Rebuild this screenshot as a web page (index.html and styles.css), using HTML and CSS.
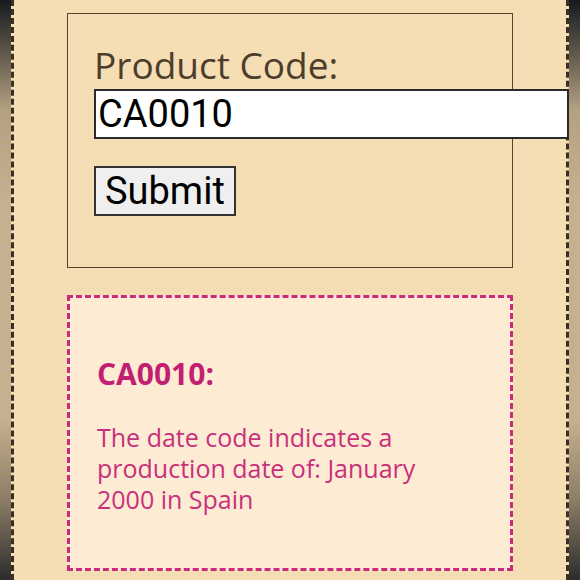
FILE: index.html
```html
<!DOCTYPE html>
<html lang="en">
<head>
    <meta charset="UTF-8">
    <meta name="viewport" content="width=device-width, initial-scale=1.0">
    <title>Date Code Lookup</title>
    <link rel="stylesheet" href="styles.css">
</head>
<body>
    <div class="page">
        <form class="lookup" onsubmit="return false;">
            <label for="code" class="lookup-label">Product Code:</label>
            <input type="text" id="code" class="lookup-input" value="CA0010">
            <button type="submit" class="lookup-button">Submit</button>
        </form>

        <div class="result">
            <h2 class="result-code">CA0010:</h2>
            <p class="result-text">The date code indicates a production date of: January 2000 in Spain</p>
        </div>
    </div>
</body>
</html>
```

FILE: styles.css
```css
body {
    margin: 0;
    height: 580px;
    overflow: hidden;
    background: linear-gradient(to bottom, #161b21 0, #5b5447 50px, #b4a182 110px, #c6b08d 200px, #c6b08d 420px, #8c7d66 500px, #2c2c2c 580px);
    font-family: "Open Sans", "Noto Sans", sans-serif;
}

.page {
    margin: 0 11px;
    min-height: 580px;
    box-sizing: border-box;
    padding: 13px 53px 0;
    background: #f5deb3;
    border-left: 3px dashed #3a2f24;
    border-right: 3px dashed #3a2f24;
}

/* form */
.lookup {
    border: 1px solid #54442f;
    padding: 26px 26px 51px;
}

.lookup-label {
    display: block;
    font-size: 37px;
    line-height: 49px;
    color: #4d3d2c;
}

.lookup-input {
    display: block;
    box-sizing: border-box;
    width: 475px;
    height: 50px;
    margin: 0;
    padding: 0 2px;
    border: 2px solid #2a2a2a;
    background: #fff;
    font-family: "Roboto", sans-serif;
    font-size: 38px;
    color: #000;
}

.lookup-button {
    display: block;
    box-sizing: border-box;
    height: 50px;
    margin-top: 27px;
    padding: 0 9px;
    border: 2px solid #333;
    background: #efefef;
    font-family: "Roboto", sans-serif;
    font-size: 38px;
    color: #000;
}

/* result */
.result {
    margin-top: 27px;
    min-height: 276px;
    box-sizing: border-box;
    padding: 56px 40px 20px 27px;
    border: 3px dashed #cc2a7c;
    background: #feebd3;
    color: #c8307c;
}

.result-code {
    margin: 0 0 28px;
    font-size: 30px;
    line-height: 40px;
    font-weight: 700;
    color: #c21f72;
}

.result-text {
    margin: 0;
    font-size: 25px;
    line-height: 31px;
}
```
